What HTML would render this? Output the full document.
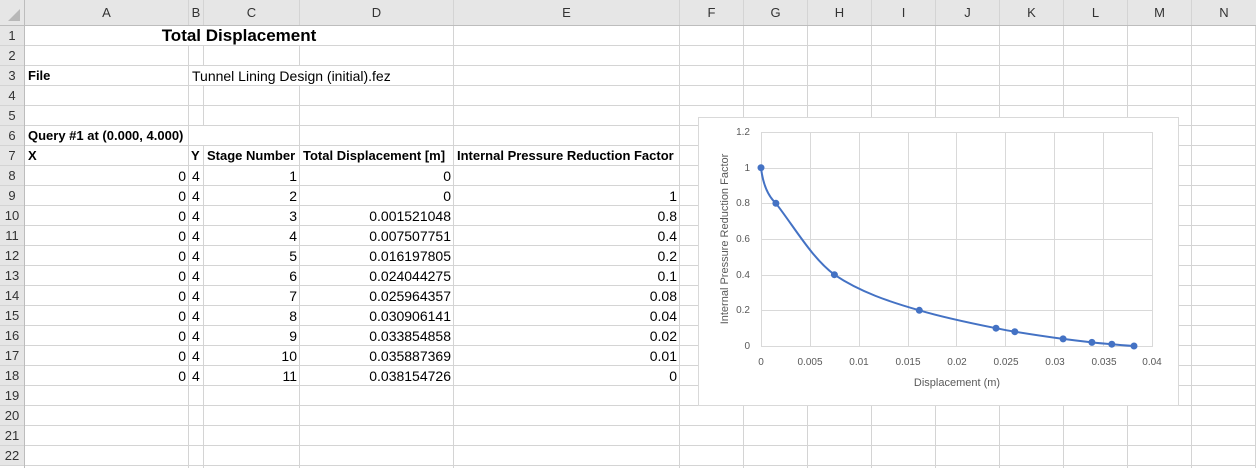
<!DOCTYPE html>
<html><head><meta charset="utf-8"><style>
body{margin:0;width:1256px;height:468px;overflow:hidden;background:#fff;font-family:"Liberation Sans",Arial,sans-serif;font-size:14px;color:#000;position:relative}
.v{position:absolute;top:0;width:1px;height:468px;background:#d4d4d4}
.t{position:absolute;line-height:20px;height:20px;white-space:nowrap}
.r{text-align:right}
.b{font-weight:bold;font-size:13px}
.hdr{position:absolute;background:#e6e6e6;color:#333;text-align:center;line-height:25px;font-size:13px}
.rh{position:absolute;left:0;width:24px;background:#e6e6e6;color:#333;text-align:center;line-height:20px;height:19px;font-size:13px}
.w{position:absolute;background:#fff}
</style></head><body>
<div style="position:absolute;left:0;top:26px;width:1256px;height:442px;background:repeating-linear-gradient(to bottom,transparent 0,transparent 19px,#d4d4d4 19px,#d4d4d4 20px)"></div>
<div class="v" style="left:188px"></div><div class="v" style="left:203px"></div><div class="v" style="left:299px"></div><div class="v" style="left:453px"></div><div class="v" style="left:679px"></div><div class="v" style="left:743px"></div><div class="v" style="left:807px"></div><div class="v" style="left:871px"></div><div class="v" style="left:935px"></div><div class="v" style="left:999px"></div><div class="v" style="left:1063px"></div><div class="v" style="left:1127px"></div><div class="v" style="left:1191px"></div><div class="v" style="left:1255px"></div>
<div class="w" style="left:25px;top:26px;width:428px;height:19px"></div>
<div class="w" style="left:190px;top:66px;width:263px;height:19px"></div>
<div class="w" style="left:200px;top:126px;width:99px;height:19px"></div>
<div class="hdr" style="left:0;top:0;width:24px;height:25px"><svg width="24" height="25" style="position:absolute;left:0;top:0"><polygon points="20,9 20,21 8,21" fill="#b8b8b8"/></svg></div>
<div class="hdr" style="left:25px;top:0;width:163px;height:25px">A</div>
<div class="hdr" style="left:189px;top:0;width:14px;height:25px">B</div>
<div class="hdr" style="left:204px;top:0;width:95px;height:25px">C</div>
<div class="hdr" style="left:300px;top:0;width:153px;height:25px">D</div>
<div class="hdr" style="left:454px;top:0;width:225px;height:25px">E</div>
<div class="hdr" style="left:680px;top:0;width:63px;height:25px">F</div>
<div class="hdr" style="left:744px;top:0;width:63px;height:25px">G</div>
<div class="hdr" style="left:808px;top:0;width:63px;height:25px">H</div>
<div class="hdr" style="left:872px;top:0;width:63px;height:25px">I</div>
<div class="hdr" style="left:936px;top:0;width:63px;height:25px">J</div>
<div class="hdr" style="left:1000px;top:0;width:63px;height:25px">K</div>
<div class="hdr" style="left:1064px;top:0;width:63px;height:25px">L</div>
<div class="hdr" style="left:1128px;top:0;width:63px;height:25px">M</div>
<div class="hdr" style="left:1192px;top:0;width:64px;height:25px">N</div>
<div style="position:absolute;left:0;top:25px;width:1256px;height:1px;background:#bdbdbd"></div>
<div style="position:absolute;left:24px;top:0;width:1px;height:468px;background:#bdbdbd"></div>
<div class="rh" style="top:26px">1</div><div class="rh" style="top:46px">2</div><div class="rh" style="top:66px">3</div><div class="rh" style="top:86px">4</div><div class="rh" style="top:106px">5</div><div class="rh" style="top:126px">6</div><div class="rh" style="top:146px">7</div><div class="rh" style="top:166px">8</div><div class="rh" style="top:186px">9</div><div class="rh" style="top:206px">10</div><div class="rh" style="top:226px">11</div><div class="rh" style="top:246px">12</div><div class="rh" style="top:266px">13</div><div class="rh" style="top:286px">14</div><div class="rh" style="top:306px">15</div><div class="rh" style="top:326px">16</div><div class="rh" style="top:346px">17</div><div class="rh" style="top:366px">18</div><div class="rh" style="top:386px">19</div><div class="rh" style="top:406px">20</div><div class="rh" style="top:426px">21</div><div class="rh" style="top:446px">22</div>
<div class="t" style="left:25px;width:428px;top:26px;text-align:center;font-size:17px;font-weight:bold">Total Displacement</div>
<div class="t b" style="left:28px;top:66px">File</div>
<div class="t" style="left:192px;top:66px">Tunnel Lining Design (initial).fez</div>
<div class="t b" style="left:28px;top:126px">Query #1 at (0.000, 4.000)</div>
<div class="t b" style="left:28px;top:146px">X</div>
<div class="t b" style="left:191px;top:146px">Y</div>
<div class="t b" style="left:207px;top:146px">Stage Number</div>
<div class="t b" style="left:303px;top:146px">Total Displacement [m]</div>
<div class="t b" style="left:457px;top:146px">Internal Pressure Reduction Factor</div>
<div class="t r" style="left:25px;width:161px;top:166px">0</div><div class="t" style="left:192px;top:166px">4</div><div class="t r" style="left:204px;width:93px;top:166px">1</div><div class="t r" style="left:300px;width:151px;top:166px">0</div>
<div class="t r" style="left:25px;width:161px;top:186px">0</div><div class="t" style="left:192px;top:186px">4</div><div class="t r" style="left:204px;width:93px;top:186px">2</div><div class="t r" style="left:300px;width:151px;top:186px">0</div><div class="t r" style="left:454px;width:223px;top:186px">1</div>
<div class="t r" style="left:25px;width:161px;top:206px">0</div><div class="t" style="left:192px;top:206px">4</div><div class="t r" style="left:204px;width:93px;top:206px">3</div><div class="t r" style="left:300px;width:151px;top:206px">0.001521048</div><div class="t r" style="left:454px;width:223px;top:206px">0.8</div>
<div class="t r" style="left:25px;width:161px;top:226px">0</div><div class="t" style="left:192px;top:226px">4</div><div class="t r" style="left:204px;width:93px;top:226px">4</div><div class="t r" style="left:300px;width:151px;top:226px">0.007507751</div><div class="t r" style="left:454px;width:223px;top:226px">0.4</div>
<div class="t r" style="left:25px;width:161px;top:246px">0</div><div class="t" style="left:192px;top:246px">4</div><div class="t r" style="left:204px;width:93px;top:246px">5</div><div class="t r" style="left:300px;width:151px;top:246px">0.016197805</div><div class="t r" style="left:454px;width:223px;top:246px">0.2</div>
<div class="t r" style="left:25px;width:161px;top:266px">0</div><div class="t" style="left:192px;top:266px">4</div><div class="t r" style="left:204px;width:93px;top:266px">6</div><div class="t r" style="left:300px;width:151px;top:266px">0.024044275</div><div class="t r" style="left:454px;width:223px;top:266px">0.1</div>
<div class="t r" style="left:25px;width:161px;top:286px">0</div><div class="t" style="left:192px;top:286px">4</div><div class="t r" style="left:204px;width:93px;top:286px">7</div><div class="t r" style="left:300px;width:151px;top:286px">0.025964357</div><div class="t r" style="left:454px;width:223px;top:286px">0.08</div>
<div class="t r" style="left:25px;width:161px;top:306px">0</div><div class="t" style="left:192px;top:306px">4</div><div class="t r" style="left:204px;width:93px;top:306px">8</div><div class="t r" style="left:300px;width:151px;top:306px">0.030906141</div><div class="t r" style="left:454px;width:223px;top:306px">0.04</div>
<div class="t r" style="left:25px;width:161px;top:326px">0</div><div class="t" style="left:192px;top:326px">4</div><div class="t r" style="left:204px;width:93px;top:326px">9</div><div class="t r" style="left:300px;width:151px;top:326px">0.033854858</div><div class="t r" style="left:454px;width:223px;top:326px">0.02</div>
<div class="t r" style="left:25px;width:161px;top:346px">0</div><div class="t" style="left:192px;top:346px">4</div><div class="t r" style="left:204px;width:93px;top:346px">10</div><div class="t r" style="left:300px;width:151px;top:346px">0.035887369</div><div class="t r" style="left:454px;width:223px;top:346px">0.01</div>
<div class="t r" style="left:25px;width:161px;top:366px">0</div><div class="t" style="left:192px;top:366px">4</div><div class="t r" style="left:204px;width:93px;top:366px">11</div><div class="t r" style="left:300px;width:151px;top:366px">0.038154726</div><div class="t r" style="left:454px;width:223px;top:366px">0</div>
<svg style="position:absolute;left:0;top:0" width="1256" height="468" font-family="Liberation Sans, Arial, sans-serif">
<rect x="698.5" y="117.5" width="480" height="288" fill="#fff" stroke="#d9d9d9"/>
<g stroke="#d9d9d9" stroke-width="1">
<line x1="761" y1="132.5" x2="1153" y2="132.5"/><line x1="761" y1="168.5" x2="1153" y2="168.5"/><line x1="761" y1="203.5" x2="1153" y2="203.5"/><line x1="761" y1="239.5" x2="1153" y2="239.5"/><line x1="761" y1="275.5" x2="1153" y2="275.5"/><line x1="761" y1="310.5" x2="1153" y2="310.5"/><line x1="761" y1="346.5" x2="1153" y2="346.5"/>
<line x1="761.5" y1="132" x2="761.5" y2="346"/><line x1="810.5" y1="132" x2="810.5" y2="346"/><line x1="859.5" y1="132" x2="859.5" y2="346"/><line x1="908.5" y1="132" x2="908.5" y2="346"/><line x1="956.5" y1="132" x2="956.5" y2="346"/><line x1="1005.5" y1="132" x2="1005.5" y2="346"/><line x1="1054.5" y1="132" x2="1054.5" y2="346"/><line x1="1103.5" y1="132" x2="1103.5" y2="346"/><line x1="1152.5" y1="132" x2="1152.5" y2="346"/>
</g>
<g fill="#595959" font-size="10" text-anchor="end">
<text x="750" y="135">1.2</text><text x="750" y="171">1</text><text x="750" y="206">0.8</text><text x="750" y="242">0.6</text><text x="750" y="278">0.4</text><text x="750" y="313">0.2</text><text x="750" y="349">0</text>
</g>
<g fill="#595959" font-size="10" text-anchor="middle">
<text x="761" y="365">0</text><text x="810" y="365">0.005</text><text x="859" y="365">0.01</text><text x="908" y="365">0.015</text><text x="957" y="365">0.02</text><text x="1006" y="365">0.025</text><text x="1055" y="365">0.03</text><text x="1104" y="365">0.035</text><text x="1152" y="365">0.04</text>
<text x="957" y="386" font-size="11">Displacement (m)</text>
<text transform="translate(728,239) rotate(-90)" font-size="11">Internal Pressure Reduction Factor</text>
</g>
<path d="M761,167.7 C763,185 768,196 775.9,203.3 C795,228 812,258 834.4,274.7 C860,292 890,302 919.3,310.3 C945,318 975,324 996,328.2 C1003,329.6 1008,330.6 1014.8,331.7 C1032,334.5 1048,336.9 1063.1,338.9 C1073,340.2 1083,341.4 1091.9,342.4 C1099,343.2 1105,343.7 1111.8,344.2 C1120,345 1127,345.5 1134,346" fill="none" stroke="#4472c4" stroke-width="2"/>
<g fill="#4472c4">
<circle cx="761" cy="167.7" r="3.5"/><circle cx="775.9" cy="203.3" r="3.5"/><circle cx="834.4" cy="274.7" r="3.5"/><circle cx="919.3" cy="310.3" r="3.5"/><circle cx="996" cy="328.2" r="3.5"/><circle cx="1014.8" cy="331.7" r="3.5"/><circle cx="1063.1" cy="338.9" r="3.5"/><circle cx="1091.9" cy="342.4" r="3.5"/><circle cx="1111.8" cy="344.2" r="3.5"/><circle cx="1134" cy="346" r="3.5"/>
</g>
</svg>
</body></html>
